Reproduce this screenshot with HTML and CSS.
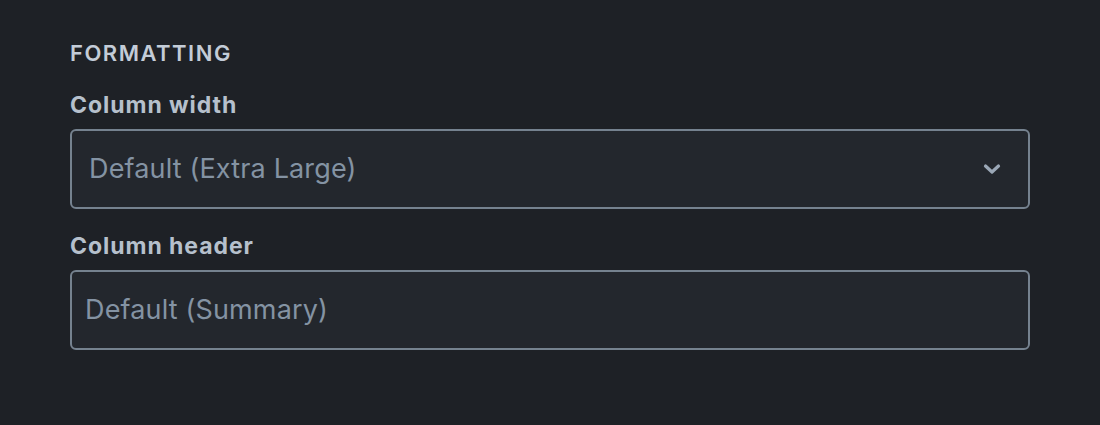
FILE: index.html
```html
<!DOCTYPE html>
<html>
<head>
<meta charset="utf-8">
<link rel="stylesheet" href="styles.css">
</head>
<body>
<div class="panel">
  <div class="section-title">FORMATTING</div>
  <div class="field">
    <label class="label">Column width</label>
    <div class="select">
      <span class="select-value">Default (Extra Large)</span>
      <svg class="chevron" width="18" height="12" viewBox="0 0 18 12"><path d="M2.5 3 L9 9 L15.5 3" fill="none" stroke="#9aa7b6" stroke-width="3.2" stroke-linecap="round" stroke-linejoin="round"/></svg>
    </div>
  </div>
  <div class="field">
    <label class="label">Column header</label>
    <div class="input"><span class="placeholder">Default (Summary)</span></div>
  </div>
</div>
</body>
</html>
```
FILE: styles.css
```css
html, body {
  margin: 0;
  padding: 0;
  background: #1e2126;
}
body {
  font-family: Inter, "Noto Sans", sans-serif;
  width: 1100px;
  height: 425px;
  overflow: hidden;
}
.panel {
  padding: 39px 70px 0 70px;
  width: 960px;
}
.section-title {
  color: #c3ccd7;
  font-size: 22px;
  font-weight: 600;
  line-height: 28px;
  letter-spacing: 1.5px;
  margin-bottom: 24px;
}
.field {
  display: flex;
  flex-direction: column;
  margin-bottom: 23px;
}
.label {
  color: #b6c0cc;
  font-size: 23px;
  font-weight: 700;
  line-height: 28px;
  letter-spacing: 0.95px;
  margin-bottom: 10px;
}
.select, .input {
  box-sizing: border-box;
  height: 80px;
  border: 2px solid #75828f;
  border-radius: 6px;
  background: #23272d;
  display: flex;
  align-items: center;
}
.select {
  padding: 0 27px 0 17px;
  justify-content: space-between;
}
.input {
  padding: 0 13px;
}
.select-value, .placeholder {
  color: #8493a3;
  font-size: 27px;
  line-height: 32px;
  letter-spacing: 0.15px;
}
.chevron {
  display: block;
}
```
